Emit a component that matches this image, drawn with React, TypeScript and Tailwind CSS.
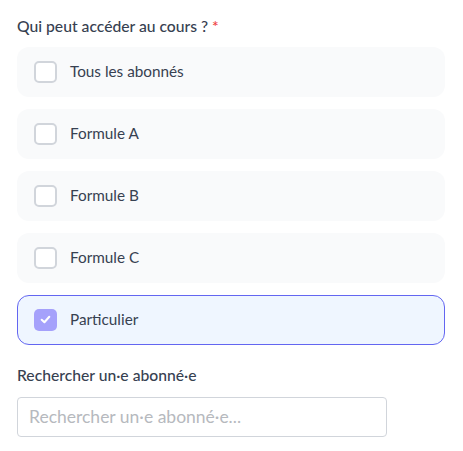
import React from "react";

const options = [
  { label: "Tous les abonnés", checked: false },
  { label: "Formule A", checked: false },
  { label: "Formule B", checked: false },
  { label: "Formule C", checked: false },
  { label: "Particulier", checked: true },
];

export default function App() {
  return (
    <div
      className="w-[463px] h-[451px] bg-white px-[17px] pt-[16px]"
      style={{ fontFamily: "Lato, 'Open Sans', sans-serif" }}
    >
      <div className="text-[15.7px] leading-[21px] font-medium text-[#374151]">
        Qui peut accéder au cours ? <span className="text-[#ef4444]">*</span>
      </div>
      <div className="mt-[10px] flex flex-col gap-[12px] w-[428px]">
        {options.map((o) =>
          o.checked ? (
            <div
              key={o.label}
              className="h-[50px] rounded-xl border border-[#6366f1] bg-[#eff6ff] flex items-center pl-[16px] pb-[1px]"
            >
              <div className="w-[23px] h-[22px] rounded-[5px] bg-[#a5a1fb] flex items-center justify-center">
                <svg width="13" height="13" viewBox="0 0 12 12" fill="none">
                  <path d="M2.5 6.2 L5 8.5 L9.5 3.5" stroke="white" strokeWidth="1.9" strokeLinecap="round" strokeLinejoin="round" />
                </svg>
              </div>
              <span className="ml-[13px] text-[15.3px] text-[#374151]">{o.label}</span>
            </div>
          ) : (
            <div
              key={o.label}
              className="h-[50px] rounded-xl bg-[#f9fafb] flex items-center pl-[17px] pb-[1px]"
            >
              <div className="w-[23px] h-[22px] rounded-[5px] border-2 border-[#d1d5db] bg-white" />
              <span className="ml-[13px] text-[15.3px] text-[#374151]">{o.label}</span>
            </div>
          )
        )}
      </div>
      <div className="mt-[20px] text-[15.7px] leading-[21px] font-medium text-[#374151]">
        Rechercher un·e abonné·e
      </div>
      <div className="mt-[11px] w-[370px] h-[40px] rounded-[4px] border border-[#d1d5db] flex items-center px-[11px]">
        <span className="text-[17.5px] text-[#b6b9be]">Rechercher un·e abonné·e...</span>
      </div>
    </div>
  );
}
